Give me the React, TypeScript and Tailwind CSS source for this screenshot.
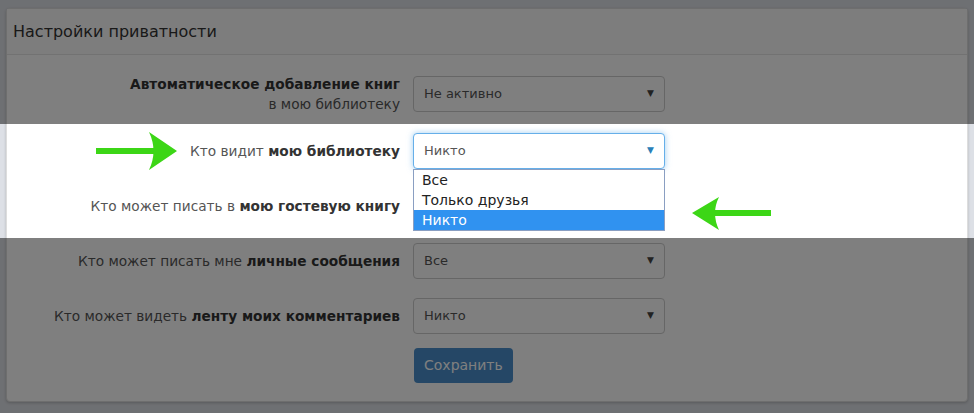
const font = { fontFamily: '"DejaVu Sans", Verdana, sans-serif' };

function Select({ value, focused = false }: { value: string; focused?: boolean }) {
  return (
    <div
      className={
        'flex h-9 w-[252px] items-center justify-between rounded px-[10px] text-[13px] text-[#555] bg-white border ' +
        (focused ? 'border-[#66afe9] shadow-[0_0_6px_rgba(102,175,233,0.6)]' : 'border-[#ccc]')
      }
    >
      <span>{value}</span>
      <span className={'text-[9px] ' + (focused ? 'text-[#2a7fb8]' : 'text-[#444]')}>▼</span>
    </div>
  );
}

function Row({ label, children }: { label: React.ReactNode; children: React.ReactNode }) {
  return (
    <div className="flex items-center">
      <div className="w-[393px] text-right text-[13.7px] leading-5 text-[#555]">{label}</div>
      <div className="relative ml-[13px]">{children}</div>
    </div>
  );
}

export default function App() {
  return (
    <div className="relative h-[413px] w-[974px] overflow-hidden bg-[#dde0e6] px-[6px] pt-2" style={font}>
      <div className="rounded border border-[#ddd] bg-white shadow-[0_1px_3px_rgba(0,0,0,0.2)]">
        <div className="flex h-[46px] items-center border-b border-[#e4e4e4] bg-[#fafafa] px-[6px] text-[16px] text-[#333]">
          Настройки приватности
        </div>
        <div className="flex flex-col gap-[19px] pb-[18px] pt-[19px]">
          <Row
            label={
              <>
                <b className="text-[#333]">Автоматическое добавление книг</b>
                <br />в мою библиотеку
              </>
            }
          >
            <Select value="Не активно" />
          </Row>
          <Row
            label={
              <>
                Кто видит <b className="text-[#333]">мою библиотеку</b>
              </>
            }
          >
            <Select value="Никто" focused />
            <div className="absolute left-0 top-full z-10 w-[252px] border border-[#8a9fc2] bg-white text-[14px] leading-5 text-[#222]">
              <div className="px-2">Все</div>
              <div className="px-2">Только друзья</div>
              <div className="bg-[#3092f0] px-2 text-white">Никто</div>
            </div>
          </Row>
          <Row
            label={
              <>
                Кто может писать в <b className="text-[#333]">мою гостевую книгу</b>
              </>
            }
          >
            <Select value="" />
          </Row>
          <Row
            label={
              <>
                Кто может писать мне <b className="text-[#333]">личные сообщения</b>
              </>
            }
          >
            <Select value="Все" />
          </Row>
          <Row
            label={
              <>
                Кто может видеть <b className="text-[#333]">ленту моих комментариев</b>
              </>
            }
          >
            <Select value="Никто" />
          </Row>
          <div className="-mt-[5px] ml-[407px]">
            <button className="h-[35px] rounded bg-[#4a8fcc] px-[10px] text-[14px] text-white">Сохранить</button>
          </div>
        </div>
      </div>

      <div className="absolute inset-x-0 top-0 h-[124px] bg-black/50" />
      <div className="absolute inset-x-0 bottom-0 top-[238px] bg-black/50" />

      <svg className="absolute left-[92px] top-[130px]" width="90" height="42" viewBox="0 0 90 42">
        <rect x="4" y="18" width="62" height="6" fill="#3cd616" />
        <path d="M85 21 L57 2 Q66 21 57 40 Z" fill="#3cd616" />
      </svg>
      <svg className="absolute left-[688px] top-[195px]" width="90" height="40" viewBox="0 0 90 40">
        <rect x="24" y="15" width="59" height="6" fill="#3cd616" />
        <path d="M4 18 L31 2 Q23 18 31 35 Z" fill="#3cd616" />
      </svg>
    </div>
  );
}
